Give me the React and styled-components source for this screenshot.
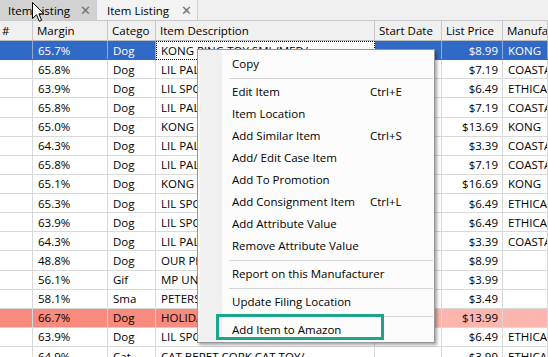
import React from "react";
import styled, { createGlobalStyle, css } from "styled-components";

const GlobalStyle = createGlobalStyle`
  html, body { margin: 0; padding: 0; background: #fff; }
  body { font-family: "Open Sans", "Noto Sans", sans-serif; font-size: 11px; color: #000; }
`;

const Page = styled.div`
  position: relative;
  width: 548px;
  height: 357px;
  overflow: hidden;
  background: #fff;
`;

const TabStrip = styled.div`
  display: flex;
  height: 20px;
  background: #f0f0f0;
  border-bottom: 1px solid #c9c9c9;
`;

const Tab = styled.div`
  display: flex;
  align-items: center;
  box-sizing: border-box;
  width: ${(p) => p.$w}px;
  padding-left: ${(p) => p.$pl}px;
  background: ${(p) => (p.$active ? "#d2d2d2" : "#f3f3f3")};
  border-right: 1px solid #cfcfcf;
  font-size: 11.5px;
  color: #000;
  white-space: nowrap;
`;

const TabLabel = styled.span`
  flex: 1;
`;

const Close = styled.span`
  width: ${(p) => p.$w}px;
  color: #707070;
  font-size: 13px;
  line-height: 1;
`;

const cols = "33px 75px 48px 219px 67px 61px 1fr";

const HeaderRow = styled.div`
  display: grid;
  grid-template-columns: ${cols};
  height: 20px;
  background: #f0f0f0;
  border-bottom: 1px solid #bcbcbc;
  box-sizing: border-box;
`;

const HeaderCell = styled.div`
  display: flex;
  align-items: center;
  padding-left: ${(p) => p.$pl ?? 4}px;
  border-right: 1px solid #c8c8c8;
  font-size: 11.5px;
  white-space: nowrap;
  overflow: hidden;
`;

const Body = styled.div`
  display: flex;
  flex-direction: column;
`;

const Row = styled.div`
  display: grid;
  grid-template-columns: ${cols};
  height: 19.14px;
  flex: none;
  box-sizing: border-box;
  border-bottom: 1px solid #d9d9d9;
  ${(p) => p.$selected && css`border-bottom-color: #3169c6;`}
`;

const Cell = styled.div`
  display: flex;
  align-items: center;
  justify-content: ${(p) => (p.$right ? "flex-end" : "flex-start")};
  padding: 0 4px 0 5px;
  border-right: 1px solid #d9d9d9;
  font-size: 11.5px;
  white-space: nowrap;
  overflow: hidden;
  box-sizing: border-box;
  ${(p) =>
    p.$tone === "sel" &&
    css`
      background: #3169c6;
      color: #fff;
      border-right-color: #8fa9da;
    `}
  ${(p) =>
    p.$tone === "focus" &&
    css`
      background: #fff;
      color: #000;
      border: 1px dotted #000;
      margin-bottom: -1px;
      padding-left: 4px;
    `}
  ${(p) =>
    p.$tone === "flag" &&
    css`
      background: #f98b7e;
    `}
  ${(p) =>
    p.$tone === "flagLight" &&
    css`
      background: #fcb6ad;
    `}
`;

const Menu = styled.div`
  position: absolute;
  left: 197px;
  top: 49px;
  width: 238px;
  box-sizing: border-box;
  padding: 3px 0 1px;
  border: 1px solid #979797;
  background: linear-gradient(to right, #fbfbfb 0 2px, #f0f0f0 2px 24px, #fcfcfc 24px);
  box-shadow: 2px 2px 3px rgba(0, 0, 0, 0.35);
`;

const MenuItem = styled.div`
  position: relative;
  display: grid;
  grid-template-columns: 138px 1fr;
  align-items: center;
  box-sizing: border-box;
  height: 22px;
  padding: 0 0 2px 34px;
  font-size: 11.5px;
  white-space: nowrap;
  ${(p) =>
    p.$marked &&
    css`
      &::after {
        content: "";
        position: absolute;
        left: 18px;
        top: -5px;
        width: 168px;
        height: 26px;
        box-sizing: border-box;
        border: 3px solid #1aa789;
      }
    `}
`;

const Separator = styled.div`
  height: 6px;
  display: flex;
  align-items: center;
  padding-left: 31px;
  padding-right: 1px;
  &::before {
    content: "";
    flex: 1;
    height: 1px;
    background: #d4d4d4;
  }
`;

const Cursor = styled.svg`
  position: absolute;
  left: 32px;
  top: 2px;
`;

const rows = [
  ["65.7%", "Dog", "KONG PING TOY SML/MED/", "$8.99", "KONG"],
  ["65.8%", "Dog", "LIL PALS DOG TOY", "$7.19", "COASTAL"],
  ["63.9%", "Dog", "LIL SPOT DOG TOY", "$6.49", "ETHICAL"],
  ["65.8%", "Dog", "LIL PALS DOG TOY", "$7.19", "COASTAL"],
  ["65.0%", "Dog", "KONG PLUSH TOY", "$13.69", "KONG"],
  ["64.3%", "Dog", "LIL PALS BRUSH", "$3.39", "COASTAL"],
  ["65.8%", "Dog", "LIL PALS DOG TOY", "$7.19", "COASTAL"],
  ["65.1%", "Dog", "KONG PLUSH TOY", "$16.69", "KONG"],
  ["65.3%", "Dog", "LIL SPOT DOG TOY", "$6.49", "ETHICAL"],
  ["63.9%", "Dog", "LIL SPOT DOG TOY", "$6.49", "ETHICAL"],
  ["64.3%", "Dog", "LIL PALS BRUSH", "$3.39", "COASTAL"],
  ["48.8%", "Dog", "OUR PETS TOY", "$8.99", ""],
  ["56.1%", "Gif", "MP UNICORN", "$3.99", ""],
  ["58.1%", "Sma", "PETERS TREAT", "$3.49", ""],
  ["66.7%", "Dog", "HOLIDAY TOY", "$13.99", "", "flag"],
  ["63.9%", "Dog", "LIL SPOT DOG TOY", "$6.49", "ETHICAL"],
  ["64.9%", "Cat", "CAT BERET CORK CAT TOY/", "$3.99", "ETHICAL"],
];

const menu = [
  { t: "Copy" },
  { sep: true },
  { t: "Edit Item", k: "Ctrl+E" },
  { t: "Item Location" },
  { t: "Add Similar Item", k: "Ctrl+S" },
  { t: "Add/ Edit Case Item" },
  { t: "Add To Promotion" },
  { t: "Add Consignment Item", k: "Ctrl+L" },
  { t: "Add Attribute Value" },
  { t: "Remove Attribute Value" },
  { sep: true },
  { t: "Report on this Manufacturer" },
  { sep: true },
  { t: "Update Filing Location" },
  { sep: true },
  { t: "Add Item to Amazon", marked: true },
];

export default function App() {
  return (
    <Page>
      <GlobalStyle />
      <TabStrip>
        <Tab $active $w={97} $pl={8}>
          <TabLabel>Item Listing</TabLabel>
          <Close $w={16}>✕</Close>
        </Tab>
        <Tab $w={101} $pl={10}>
          <TabLabel>Item Listing</TabLabel>
          <Close $w={16}>✕</Close>
        </Tab>
      </TabStrip>
      <HeaderRow>
        <HeaderCell $pl={2}>#</HeaderCell>
        <HeaderCell>Margin</HeaderCell>
        <HeaderCell>Catego</HeaderCell>
        <HeaderCell>Item Description</HeaderCell>
        <HeaderCell>Start Date</HeaderCell>
        <HeaderCell>List Price</HeaderCell>
        <HeaderCell>Manufacturer</HeaderCell>
      </HeaderRow>
      <Body>
        {rows.map((r, i) => {
          const sel = i === 0;
          const flag = r[5] === "flag";
          const tone = sel ? "sel" : flag ? "flag" : undefined;
          const tone2 = sel ? "sel" : flag ? "flagLight" : undefined;
          return (
            <Row key={i} $selected={sel}>
              <Cell $tone={tone} />
              <Cell $tone={tone}>{r[0]}</Cell>
              <Cell $tone={tone}>{r[1]}</Cell>
              <Cell $tone={sel ? "focus" : tone}>{r[2]}</Cell>
              <Cell $tone={tone2} />
              <Cell $tone={tone2} $right>{r[3]}</Cell>
              <Cell $tone={tone2}>{r[4]}</Cell>
            </Row>
          );
        })}
      </Body>
      <Menu>
        {menu.map((m, i) =>
          m.sep ? (
            <Separator key={i} />
          ) : (
            <MenuItem key={i} $marked={m.marked}>
              <span>{m.t}</span>
              <span>{m.k || ""}</span>
            </MenuItem>
          )
        )}
      </Menu>
      <Cursor width="13" height="21" viewBox="0 0 13 21">
        <path
          d="M0.5 0.5 L0.5 16.5 L4.5 12.7 L7.3 19.3 L9.6 18.3 L6.9 11.8 L12 11.8 Z"
          fill="#fff"
          stroke="#000"
          strokeWidth="1"
          strokeLinejoin="miter"
        />
      </Cursor>
    </Page>
  );
}
